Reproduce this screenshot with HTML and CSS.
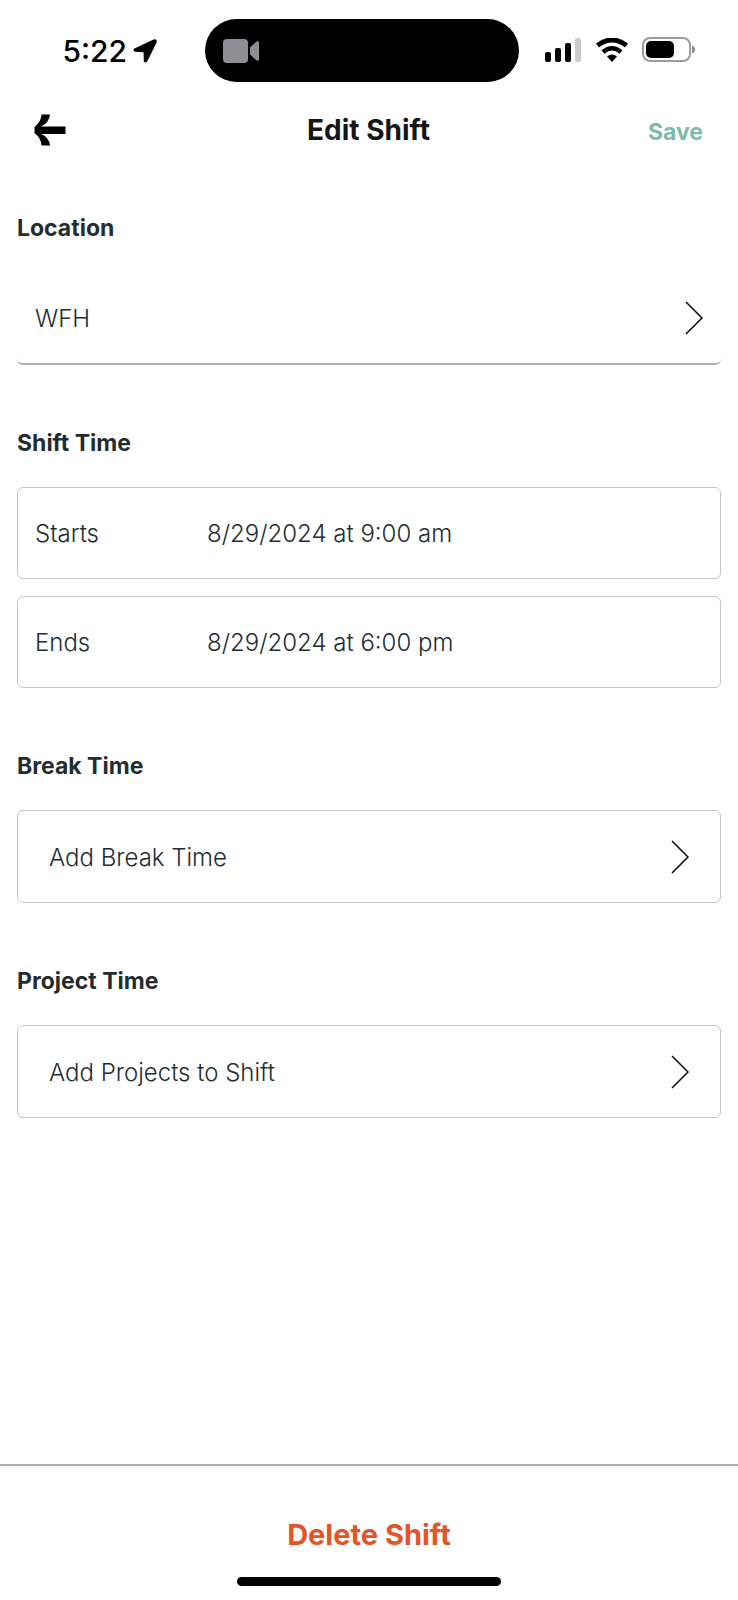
FILE: index.html
```
<!DOCTYPE html>
<html lang="en">
<head>
  <meta charset="utf-8">
  <meta name="viewport" content="width=device-width">
  <title>Edit Shift</title>
  <link rel="stylesheet" href="styles.css">
</head>
<body>
 <div id="main">
  <div class="status">
   <div class="status_left">
    <span class="clock">5:22</span>
    <svg width="24" height="24" viewBox="0 0 24 24" aria-hidden="true">
     <path d="M1.500 9.500 L20.500 .6 Q24.500 -.5 23.600 3.500 L14.500 22 Q12.500 24.500 10.800 22.500 L10.600 13.200 L1.800 12.800 Q-.8 11.300 1.500 9.500Z"/>
    </svg>
   </div>
   <div class="island">
    <svg width="36" height="24" viewBox="0 0 36 24" aria-hidden="true">
     <rect x="0" y="0" width="25" height="24" rx="4" fill="#8f8e94"/>
     <path d="M27 8.500 L33 3 Q34 2 36 2.500 V21.500 Q34 22 33 21 L27 15.500Z" fill="#8f8e94"/>
    </svg>
   </div>
   <div class="status_right">
    <svg width="37" height="24" viewBox="0 0 37 24" aria-hidden="true">
     <rect x="0" y="14" width="6" height="10" rx="2"/>
     <rect x="10" y="10" width="6" height="14" rx="2"/>
     <rect x="20" y="5" width="6" height="19" rx="2"/>
     <rect x="30" y="0" width="6" height="24" rx="2" fill="#cbcbcb"/>
    </svg>
    <svg width="34" height="24" viewBox="0 0 34 24" aria-hidden="true">
     <path d="M2.500 7.500 Q17 -3.500 31.500 7.500" fill="none" stroke="#000" stroke-width="5"/>
     <path d="M8 14 Q17 6.500 26 14" fill="none" stroke="#000" stroke-width="4.500"/>
     <path d="M12 18.500 Q17 14.500 22 18.500 L17 24Z"/>
    </svg>
    <svg width="54" height="25" viewBox="0 0 54 25" aria-hidden="true">
     <rect x="1" y="1" width="47" height="23" rx="7" fill="none" stroke="#9b9b9b" stroke-width="2"/>
     <rect x="4" y="4" width="28" height="17" rx="5"/>
     <path d="M50 8.500 Q53 9.500 53 12.500 Q53 15.500 50 16.500Z" fill="#8a8a8a"/>
    </svg>
   </div>
  </div>

  <header class="navbar">
   <button class="back" type="button" aria-label="Back">
    <svg width="32" height="32" viewBox="0 0 32 32" aria-hidden="true">
     <path d="M7.500 0.500 H16 Q15 9 7 12.500 H31.500 V20 H7 Q15 23 16 31.500 H7.500 Q7 24 .5 19 V13 Q7 8 7.500 .5Z"/>
    </svg>
   </button>
   <h1>Edit Shift</h1>
   <button class="save" type="button">Save</button>
  </header>

  <main>
   <section>
    <h2>Location</h2>
    <button class="row underlined" type="button">
     <span>WFH</span>
     <svg class="chevron" width="18" height="34" viewBox="0 0 18 34" aria-hidden="true"><path d="M1 1 L17 17 L1 33"/></svg>
    </button>
   </section>

   <section>
    <h2>Shift Time</h2>
    <div class="times">
     <button class="row boxed" type="button">
      <span class="label">Starts</span>
      <span>8/29/2024 at 9:00 am</span>
     </button>
     <button class="row boxed" type="button">
      <span class="label">Ends</span>
      <span>8/29/2024 at 6:00 pm</span>
     </button>
    </div>
   </section>

   <section>
    <h2>Break Time</h2>
    <button class="row boxed inset" type="button">
     <span>Add Break Time</span>
     <svg class="chevron" width="18" height="34" viewBox="0 0 18 34" aria-hidden="true"><path d="M1 1 L17 17 L1 33"/></svg>
    </button>
   </section>

   <section>
    <h2>Project Time</h2>
    <button class="row boxed inset" type="button">
     <span>Add Projects to Shift</span>
     <svg class="chevron" width="18" height="34" viewBox="0 0 18 34" aria-hidden="true"><path d="M1 1 L17 17 L1 33"/></svg>
    </button>
   </section>
  </main>

  <footer>
   <button class="delete" type="button">Delete Shift</button>
   <div class="home"></div>
  </footer>
 </div>
</body>
</html>
```
FILE: styles.css
```
*,*:before,*:after {box-sizing:border-box;}
body{
 margin:0;
 background:white;
 color:#232d2f;
 font-family:Inter,"Liberation Sans",sans-serif;
}
button{
 margin:0;
 padding:0;
 border:0;
 background:none;
 color:inherit;
 font:inherit;
 cursor:pointer;
}
svg{
 display:block;
 flex:none;
}
h1,h2{
 margin:0;
}
#main{
 display:flex;
 flex-direction:column;
 min-height:100vh;
}

/* phone status bar */
.status{
 display:grid;
 grid-template-columns:1fr 314px 1fr;
 align-items:center;
 padding-top:19px;
 color:#000;
}
.status_left{
 display:flex;
 align-items:center;
 justify-content:flex-end;
 gap:6px;
 padding-right:55px;
}
.clock{
 font-size:30px;
 line-height:36px;
 font-weight:500;
}
.island{
 display:flex;
 align-items:center;
 height:63px;
 margin-left:-7px;
 margin-right:7px;
 padding-left:18px;
 border-radius:32px;
 background:#000;
}
.status_right{
 display:flex;
 align-items:center;
 justify-content:flex-start;
 gap:13px;
 padding-left:19px;
 padding-bottom:2px;
}

.navbar{
 display:grid;
 grid-template-columns:1fr auto 1fr;
 align-items:center;
 height:96px;
 padding:0 35px 0 34px;
}
.navbar h1{
 font-size:28px;
 line-height:36px;
 font-weight:700;
 color:#161618;
}
.back{
 justify-self:start;
}
.save{
 justify-self:end;
 padding-top:3px;
 font-size:23px;
 line-height:28px;
 font-weight:700;
 color:#7dbba6;
}

main{
 display:flex;
 flex-direction:column;
 gap:66px;
 flex:1;
 padding:38px 17px;
}
h2{
 margin-bottom:32px;
 font-size:23px;
 line-height:24px;
 font-weight:700;
}
.row{
 display:flex;
 align-items:center;
 width:100%;
 height:93px;
 padding:0 17px;
 font-size:24px;
 line-height:28px;
 font-weight:300;
 text-align:left;
}
.row span{
 padding-top:2px;
}
.boxed{
 border:1px solid #c4c5cb;
 border-radius:6px;
}
.underlined{
 padding:0 18px;
 border-bottom:2px solid #acb1b4;
 border-radius:6px;
}
.inset{
 padding:0 31px;
}
.times{
 display:flex;
 flex-direction:column;
 gap:17px;
}
.times .row{
 height:92px;
}
.label{
 width:172px;
}
.chevron{
 margin-left:auto;
 fill:none;
 stroke:#000;
 stroke-width:1.5;
}

footer{
 display:flex;
 flex-direction:column;
 align-items:center;
 gap:24px;
 padding:51px 0 14px;
 border-top:2px solid #acb1b4;
}
.delete{
 font-size:29px;
 line-height:36px;
 font-weight:700;
 color:#e0562b;
}
.home{
 width:264px;
 height:9px;
 border-radius:5px;
 background:#000;
}
```
